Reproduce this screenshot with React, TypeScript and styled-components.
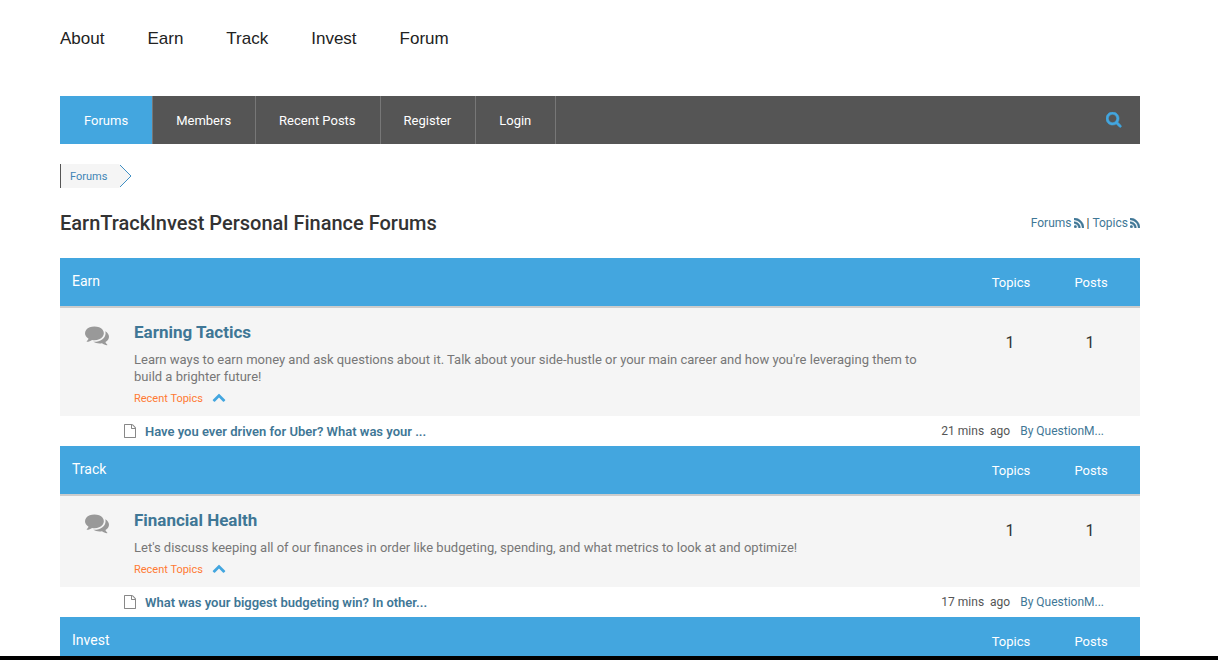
import React from "react";
import styled, { createGlobalStyle } from "styled-components";

const GlobalStyle = createGlobalStyle`
  *, *::before, *::after { box-sizing: border-box; }
  body {
    margin: 0;
    background: #fff;
    color: #333;
    font-family: Roboto, "Liberation Sans", sans-serif;
    font-size: 13px;
  }
  a { color: inherit; text-decoration: none; }
`;

const Page = styled.div`
  display: flex;
  flex-direction: column;
  height: 100vh;
`;

const Content = styled.div`
  flex: 1;
  min-height: 0;
  overflow: hidden;
  padding: 0 78px 0 60px;
`;

const BottomEdge = styled.footer`
  height: 4px;
  background: #000;
`;

const SiteNav = styled.nav`
  display: flex;
  gap: 43px;
  padding: 27px 0 45px;
  color: #222;
  font-family: "Liberation Sans", Arial, sans-serif;
  font-size: 17px;
  line-height: 24px;
`;

const ForumBar = styled.div`
  display: flex;
  height: 48px;
  background: #555;
`;

const ForumTabs = styled.nav`
  display: flex;
  flex: 1;
`;

const ForumTab = styled.a<{ $active?: boolean }>`
  padding: 2px 24px 0 ${(p) => (p.$active ? 24 : 23)}px;
  border-right: 1px solid #777;
  background: ${(p) => (p.$active ? "#43a6df" : "transparent")};
  color: #fff;
  line-height: 46px;
`;

const SearchButton = styled.button`
  display: flex;
  align-items: center;
  padding: 0 18px;
  border: 0;
  background: none;
  color: #43a6df;
  cursor: pointer;
  svg { stroke: currentColor; stroke-width: 60px; }
`;

const Breadcrumb = styled.nav`
  display: flex;
  margin-top: 20px;
  height: 24px;
`;

const Crumb = styled.a`
  padding: 2px 12px 0 9px;
  border-left: 1px solid #555;
  background: #f5f5f5;
  color: #3f85b5;
  font-size: 11px;
  line-height: 22px;
`;

const CrumbArrow = styled.svg`
  width: 14px;
  height: 24px;
`;

const TitleRow = styled.div`
  display: flex;
  align-items: center;
  justify-content: space-between;
  height: 30px;
  margin: 20px 0;
`;

const Title = styled.h1`
  margin: 0;
  font-size: 20px;
  font-weight: 500;
  line-height: 30px;
`;

const Feeds = styled.div`
  display: flex;
  align-items: center;
  gap: 3px;
  font-size: 12px;
`;

const FeedLink = styled.a`
  display: flex;
  align-items: center;
  gap: 2px;
  color: #3f7796;
  svg { stroke: currentColor; stroke-width: 60px; }
`;

const Board = styled.table`
  width: 100%;
  table-layout: fixed;
  border-collapse: separate;
  border-spacing: 0;
  td, th { padding: 0; }
`;

const IconCol = styled.col` width: 74px; `;
const CountCol = styled.col` width: 80px; `;
const LastCol = styled.col` width: 90px; `;

const CategoryRow = styled.tr`
  height: 50px;
  background: #43a6df;
  color: #fff;
  th { border-bottom: 2px solid #ccc; }
`;

const CategoryName = styled.th`
  && { padding: 0 12px 2px; }
  text-align: left;
  font-size: 14px;
  font-weight: 400;
`;

const CountHead = styled.th<{ $last?: boolean }>`
  && { padding: 0 ${(p) => (p.$last ? 10 : 0)}px 0 2px; }
  text-align: center;
  font-size: 13px;
  font-weight: 400;
`;

const ForumRow = styled.tr`
  background: #f5f5f5;
  vertical-align: top;
`;

const IconCell = styled.td`
  && { padding: 15px 0 0 25px; }
  color: #999;
`;

const InfoCell = styled.td`
  && { padding: 14px 30px 10px 0; }
`;

const ForumName = styled.h2`
  margin: 0 0 9px;
  color: #3f7796;
  font-size: 17px;
  font-weight: 700;
  line-height: 20px;
`;

const Description = styled.p`
  margin: 0 0 5px;
  color: #777;
  line-height: 17px;
`;

const RecentToggle = styled.button`
  display: flex;
  align-items: center;
  gap: 9px;
  height: 16px;
  padding: 0;
  border: 0;
  background: none;
  color: #ff7a33;
  font: 11px Roboto, sans-serif;
  cursor: pointer;
  svg { color: #43a6df; }
`;

const CountCell = styled.td<{ $last?: boolean }>`
  && { padding: 25px ${(p) => (p.$last ? 10 : 0)}px 0 0; }
  text-align: center;
  font-size: 16px;
  line-height: 20px;
`;

const Recent = styled.div`
  display: flex;
  align-items: center;
  height: 30px;
  padding: 0 36px 0 63px;
  color: #888;
  font-size: 12px;
`;

const RecentTitle = styled.a`
  flex: 1;
  margin-left: 8px;
  color: #3f7796;
  font-size: 13px;
  font-weight: 600;
`;

const Age = styled.span`
  margin-right: 10px;
  color: #555;
  white-space: pre;
`;

const Author = styled.a`
  color: #3f7796;
`;

const Glyph = styled.svg`
  display: block;
  flex: none;
  fill: currentColor;
`;

const paths = {
  search:
    "M1216 832q0-185-131.5-316.5t-316.5-131.5-316.5 131.5-131.5 316.5 131.5 316.5 316.5 131.5 316.5-131.5 131.5-316.5zm512 832q0 52-38 90t-90 38q-54 0-90-38l-343-342q-179 124-399 124-143 0-273.5-55.5t-225-150-150-225-55.5-273.5 55.5-273.5 150-225 225-150 273.5-55.5 273.5 55.5 225 150 150 225 55.5 273.5q0 220-124 399l343 343q37 37 37 90z",
  rss:
    "M576 1344q0 80-56 136t-136 56-136-56-56-136 56-136 136-56 136 56 56 136zm512 123q2 28-17 48-18 21-47 21h-135q-25 0-43-16.5t-20-41.5q-22-229-184.5-391.5t-391.5-184.5q-25-2-41.5-20t-16.5-43v-135q0-29 21-47 17-17 43-17h5q160 13 306 80.5t259 181.5q114 113 181.5 259t80.5 306zm512 2q2 27-18 47-18 20-46 20h-143q-26 0-44.5-17.5t-19.5-42.5q-12-215-101-408.5t-231.5-336-336-231.5-408.5-102q-25-1-42.5-19.5t-17.5-43.5v-143q0-28 20-46 18-18 44-18h3q262 13 501.5 120t425.5 294q187 186 294 425.5t120 501.5z",
  comments:
    "M1408 768q0 139-94 257t-256.5 186.5-353.5 68.5q-86 0-176-16-124 88-278 128-36 9-86 16h-3q-11 0-20.5-8t-11.5-21q-1-3-1-6.5t.5-6.5 2-6l2.5-5 3.5-5.5 4-5 4.5-5 4-4.5q5-6 23-25t26-29.5 22.5-29 25-38.5 20.5-44q-124-72-195-177t-71-224q0-139 94-257t256.5-186.5 353.5-68.5 353.5 68.5 256.5 186.5 94 257zm384 256q0 120-71 224.5t-195 176.5q10 24 20.5 44t25 38.5 22.5 29 26 29.5 23 25q1 1 4 4.5t4.5 5 4 5 3.5 5.5l2.5 5 2 6 .5 6.5-1 6.5q-3 14-13 22t-22 7q-50-7-86-16-154-40-278-128-90 16-176 16-271 0-472-132 58 4 88 4 161 0 309-45t264-129q125-92 192-212t67-254q0-77-23-152 129 71 204 178t75 230z",
  up:
    "M1683 1331l-166 165q-19 19-45 19t-45-19l-531-531-531 531q-19 19-45 19t-45-19l-166-165q-19-19-19-45.5t19-45.5l742-741q19-19 45-19t45 19l742 741q19 19 19 45.5t-19 45.5z",
  file:
    "M1596 380q28 28 48 76t20 88v1152q0 40-28 68t-68 28h-1344q-40 0-68-28t-28-68v-1600q0-40 28-68t68-28h896q40 0 88 20t76 48zm-444-244v376h376q-10-29-22-41l-313-313q-12-12-41-22zm384 1528v-1024h-416q-40 0-68-28t-28-68v-416h-768v1536h1280z",
};

function Icon({ name, width, height, box = "0 0 1792 1792" }: {
  name: keyof typeof paths;
  width: number;
  height: number;
  box?: string;
}) {
  return (
    <Glyph width={width} height={height} viewBox={box} aria-hidden="true">
      <path d={paths[name]} />
    </Glyph>
  );
}

type Forum = { name: string; text: string; topics: number; posts: number; recent: string; age: string; author: string };

const categories: { name: string; forum?: Forum }[] = [
  {
    name: "Earn",
    forum: {
      name: "Earning Tactics",
      text: "Learn ways to earn money and ask questions about it. Talk about your side-hustle or your main career and how you're leveraging them to build a brighter future!",
      topics: 1,
      posts: 1,
      recent: "Have you ever driven for Uber? What was your ...",
      age: "21 mins  ago",
      author: "By QuestionM...",
    },
  },
  {
    name: "Track",
    forum: {
      name: "Financial Health",
      text: "Let's discuss keeping all of our finances in order like budgeting, spending, and what metrics to look at and optimize!",
      topics: 1,
      posts: 1,
      recent: "What was your biggest budgeting win? In other...",
      age: "17 mins  ago",
      author: "By QuestionM...",
    },
  },
  { name: "Invest" },
];

function Category({ name, forum }: { name: string; forum?: Forum }) {
  return (
    <Board>
      <colgroup>
        <IconCol />
        <col />
        <CountCol />
        <LastCol />
      </colgroup>
      <thead>
        <CategoryRow>
          <CategoryName colSpan={2}>{name}</CategoryName>
          <CountHead>Topics</CountHead>
          <CountHead $last>Posts</CountHead>
        </CategoryRow>
      </thead>
      {forum && (
        <tbody>
          <ForumRow>
            <IconCell>
              <Icon name="comments" width={24} height={24} />
            </IconCell>
            <InfoCell>
              <ForumName><a href="#forum">{forum.name}</a></ForumName>
              <Description>{forum.text}</Description>
              <RecentToggle type="button">
                Recent Topics
                <Icon name="up" width={14} height={14} box="0 128 1792 1792" />
              </RecentToggle>
            </InfoCell>
            <CountCell>{forum.topics}</CountCell>
            <CountCell $last>{forum.posts}</CountCell>
          </ForumRow>
          <tr>
            <td colSpan={4}>
              <Recent>
                <Icon name="file" width={14} height={14} />
                <RecentTitle href="#topic">{forum.recent}</RecentTitle>
                <Age>{forum.age}</Age>
                <Author href="#author">{forum.author}</Author>
              </Recent>
            </td>
          </tr>
        </tbody>
      )}
    </Board>
  );
}

export default function App() {
  return (
    <Page>
      <GlobalStyle />
      <Content>
        <SiteNav aria-label="Site">
          {["About", "Earn", "Track", "Invest", "Forum"].map((t) => (
            <a key={t} href={`#${t}`}>{t}</a>
          ))}
        </SiteNav>
        <ForumBar>
          <ForumTabs aria-label="Forum">
            {["Forums", "Members", "Recent Posts", "Register", "Login"].map((t, i) => (
              <ForumTab key={t} href="#tab" $active={i === 0}>{t}</ForumTab>
            ))}
          </ForumTabs>
          <SearchButton type="button" aria-label="Search">
            <Icon name="search" width={16} height={16} box="64 128 1728 1728" />
          </SearchButton>
        </ForumBar>
        <Breadcrumb aria-label="Breadcrumb">
          <Crumb href="#forums">Forums</Crumb>
          <CrumbArrow viewBox="0 0 14 24" aria-hidden="true">
            <path d="M0 0L12 12L0 24Z" fill="#f5f5f5" />
            <path d="M1 1L12 12L1 23" fill="none" stroke="#3f8fc4" />
          </CrumbArrow>
        </Breadcrumb>
        <TitleRow>
          <Title>EarnTrackInvest Personal Finance Forums</Title>
          <Feeds>
            <FeedLink href="#forums-feed">
              Forums
              <Icon name="rss" width={10} height={10} box="192 128 1408 1408" />
            </FeedLink>
            <span>|</span>
            <FeedLink href="#topics-feed">
              Topics
              <Icon name="rss" width={10} height={10} box="192 128 1408 1408" />
            </FeedLink>
          </Feeds>
        </TitleRow>
        <main>
          {categories.map((c) => (
            <Category key={c.name} {...c} />
          ))}
        </main>
      </Content>
      <BottomEdge />
    </Page>
  );
}
